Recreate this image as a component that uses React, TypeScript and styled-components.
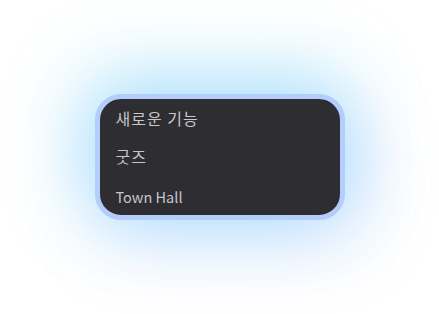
import styled, { createGlobalStyle } from 'styled-components';

const GlobalStyle = createGlobalStyle`
  html, body {
    margin: 0;
    padding: 0;
    background: #ffffff;
  }
  body {
    font-family: "Noto Sans CJK KR", "Noto Sans", sans-serif;
  }
`;

const Page = styled.div`
  width: 439px;
  height: 314px;
  display: flex;
  align-items: center;
  justify-content: center;
  overflow: hidden;
`;

const Menu = styled.ul`
  list-style: none;
  margin: 0;
  padding: 0;
  width: 240px;
  background: #2e2d32;
  border: 5px solid #b3cdfd;
  border-radius: 26px;
  box-shadow:
    -6px -14px 75px 8px rgba(64, 200, 245, 0.34),
    10px 14px 75px 6px rgba(100, 150, 250, 0.26);
`;

const Item = styled.li<{ $latin?: boolean }>`
  height: 38px;
  display: flex;
  align-items: center;
  padding: 0 16px;
  font-size: ${(p) => (p.$latin ? '14.5px' : '16px')};
  letter-spacing: ${(p) => (p.$latin ? '0' : '1px')};
  color: #c6c6cc;
  padding-top: ${(p) => (p.$latin ? '2px' : '0')};
`;

const items = [
  { label: '새로운 기능' },
  { label: '굿즈' },
  { label: 'Town Hall', latin: true },
];

export default function App() {
  return (
    <>
      <GlobalStyle />
      <Page>
        <Menu>
          {items.map((it) => (
            <Item key={it.label} $latin={it.latin}>
              {it.label}
            </Item>
          ))}
        </Menu>
      </Page>
    </>
  );
}
